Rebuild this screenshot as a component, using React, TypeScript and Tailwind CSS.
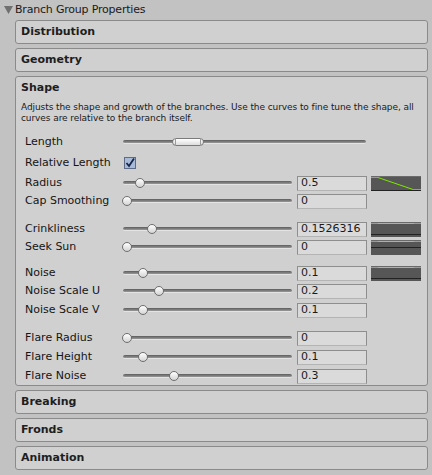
import React from "react";

type Curve = "down" | "flatBottom" | "flatMid";

const CurveBox: React.FC<{ kind: Curve }> = ({ kind }) => (
  <svg width="50" height="15" viewBox="0 0 50 15" className="block">
    <rect x="0" y="0" width="50" height="15" fill="#565656" />
    <rect x="0" y="0" width="50" height="1" fill="#6a6a6a" />
    {kind === "down" && (
      <>
        <line x1="0" y1="1.5" x2="7" y2="1.5" stroke="#9a9a9a" strokeWidth="1" />
        <polyline points="7,1.5 42,13.5" fill="none" stroke="#7fe800" strokeWidth="1" />
        <line x1="42" y1="13.5" x2="50" y2="13.5" stroke="#9a9a9a" strokeWidth="1" />
        <line x1="0" y1="14.5" x2="50" y2="14.5" stroke="#222" strokeWidth="1" />
      </>
    )}
    {kind !== "down" && (
      <>
        <line x1="0" y1="1.5" x2="7" y2="1.5" stroke="#9a9a9a" strokeWidth="1" />
        <line x1="7" y1="1.5" x2="43" y2="1.5" stroke="#7fe800" strokeWidth="1" />
        <line x1="43" y1="1.5" x2="50" y2="1.5" stroke="#9a9a9a" strokeWidth="1" />
        <line
          x1="0"
          y1={kind === "flatMid" ? 7.5 : 12.5}
          x2="50"
          y2={kind === "flatMid" ? 7.5 : 12.5}
          stroke="#222"
          strokeWidth="1"
        />
      </>
    )}
  </svg>
);

const Track: React.FC<{ className: string; children?: React.ReactNode }> = ({ className, children }) => (
  <div className={`relative h-[10px] ${className}`}>
    <div className="absolute left-0 right-0 top-[3px] h-[4px] rounded-full bg-gradient-to-b from-[#5c5c5c] to-[#9a9a9a] border-b border-[#e4e4e4]" />
    {children}
  </div>
);

const Thumb: React.FC<{ at: number }> = ({ at }) => (
  <div
    className="absolute top-0 h-[10px] w-[10px] rounded-full border border-[#6e6e6e] bg-gradient-to-b from-[#ffffff] to-[#d4d4d4]"
    style={{ left: at - 5 }}
  />
);

const SliderRow: React.FC<{
  label: string;
  at: number;
  value: string;
  curve?: Curve;
  className?: string;
}> = ({ label, at, value, curve, className = "" }) => (
  <div className={`flex h-[18px] items-center ${className}`}>
    <span className="w-[106px] pl-[8px] shrink-0">{label}</span>
    <Track className="w-[169px] shrink-0">
      <Thumb at={at} />
    </Track>
    <div className="ml-[5px] flex h-[15px] w-[70px] shrink-0 items-center border border-[#8e8e8e] border-b-[#b4b4b4] bg-[#dadada] pl-[3px] text-[#1a1a1a]">
      {value}
    </div>
    {curve && (
      <div className="ml-[4px]">
        <CurveBox kind={curve} />
      </div>
    )}
  </div>
);

const Foldout: React.FC<{ title: string }> = ({ title }) => (
  <div className="flex h-[24px] items-center rounded-[3px] border border-[#8a8a8a] bg-[#d0d0d0] pl-[5px] font-bold text-[#1e1e1e]">
    {title}
  </div>
);

export default function App() {
  return (
    <div
      className="w-[432px] h-[475px] overflow-hidden bg-[#c2c2c2] text-[11px] text-[#151515]"
      style={{ fontFamily: '"DejaVu Sans", "Liberation Sans", sans-serif' }}
    >
      <div className="flex h-[20px] items-center pl-[4px]">
        <svg width="9" height="8" viewBox="0 0 9 8" className="mr-[2px]">
          <polygon points="0,0 9,0 4.5,8" fill="#707070" />
        </svg>
        <span className="tracking-[-0.2px] text-[#1a1a1a]">Branch Group Properties</span>
      </div>

      <div className="ml-[15px] mr-[4px] flex flex-col gap-[4px]">
        <Foldout title="Distribution" />
        <Foldout title="Geometry" />

        <div className="h-[310px] rounded-[3px] border border-[#8a8a8a] bg-[#d0d0d0] pl-[1px]">
          <div className="flex h-[22px] items-center pl-[4px] font-bold text-[#1e1e1e]">Shape</div>
          <p className="mt-[3px] pl-[4px] pr-[4px] text-[9px] leading-[11px] tracking-[-0.08px] text-[#1a1a1a]">
            Adjusts the shape and growth of the branches. Use the curves to fine tune the shape, all curves are
            relative to the branch itself.
          </p>

          <div className="mt-[9px] flex h-[18px] items-center">
            <span className="w-[106px] pl-[8px] shrink-0">Length</span>
            <Track className="w-[243px] shrink-0">
              <div className="absolute top-[1px] left-[49px] h-[8px] w-[32px] rounded-[4px] border border-[#7a7a7a] bg-gradient-to-b from-[#ffffff] to-[#dcdcdc]" />
              <div className="absolute top-[1px] left-[52px] h-[8px] w-[1px] bg-[#9a9a9a]" />
              <div className="absolute top-[1px] left-[77px] h-[8px] w-[1px] bg-[#9a9a9a]" />
            </Track>
          </div>

          <div className="mt-[3px] flex h-[18px] items-center">
            <span className="w-[106px] pl-[8px] shrink-0">Relative Length</span>
            <svg width="12" height="12" viewBox="0 0 12 12" className="ml-[1px]">
              <rect x="0.5" y="0.5" width="11" height="11" fill="#a9bad8" stroke="#5d6b86" />
              <polyline points="2.5,6 5,9 10,1.5" fill="none" stroke="#15264a" strokeWidth="1.8" />
            </svg>
          </div>

          <SliderRow label="Radius" at={17} value="0.5" curve="down" className="mt-[2px]" />
          <SliderRow label="Cap Smoothing" at={4} value="0" />

          <SliderRow label="Crinkliness" at={29} value="0.1526316" curve="flatBottom" className="mt-[10px]" />
          <SliderRow label="Seek Sun" at={4} value="0" curve="flatMid" />

          <SliderRow label="Noise" at={20} value="0.1" curve="flatBottom" className="mt-[8px]" />
          <SliderRow label="Noise Scale U" at={36} value="0.2" />
          <SliderRow label="Noise Scale V" at={20} value="0.1" className="mt-[1px]" />

          <SliderRow label="Flare Radius" at={4} value="0" className="mt-[10px]" />
          <SliderRow label="Flare Height" at={20} value="0.1" className="mt-[1px]" />
          <SliderRow label="Flare Noise" at={51} value="0.3" className="mt-[1px]" />
        </div>

        <Foldout title="Breaking" />
        <Foldout title="Fronds" />
        <Foldout title="Animation" />
      </div>
    </div>
  );
}
